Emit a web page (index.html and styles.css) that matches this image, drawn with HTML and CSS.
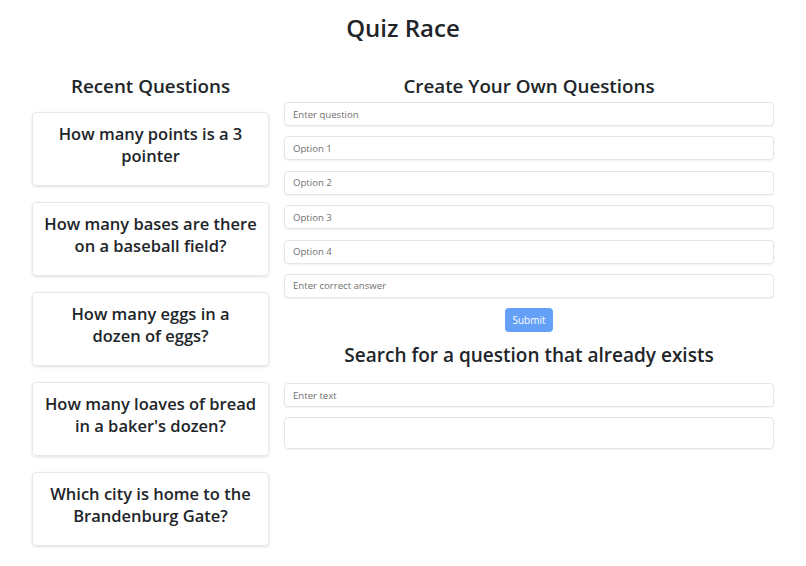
FILE: index.html
```html
<!DOCTYPE html>
<html>
<head>
<meta charset="utf-8">
<link rel="stylesheet" href="styles.css">
</head>
<body>
<h1 class="title">Quiz Race</h1>
<div class="layout">
  <section class="recent">
    <h2 class="heading">Recent Questions</h2>
    <div class="card"><h3 class="card-text">How many points is a 3 pointer</h3></div>
    <div class="card"><h3 class="card-text">How many bases are there on a baseball field?</h3></div>
    <div class="card"><h3 class="card-text">How many eggs in a<br>dozen of eggs?</h3></div>
    <div class="card"><h3 class="card-text">How many loaves of bread in a baker's dozen?</h3></div>
    <div class="card"><h3 class="card-text">Which city is home to the Brandenburg Gate?</h3></div>
  </section>
  <section class="create">
    <h2 class="heading">Create Your Own Questions</h2>
    <form class="form">
      <input class="field" type="text" placeholder="Enter question">
      <input class="field" type="text" placeholder="Option 1">
      <input class="field" type="text" placeholder="Option 2">
      <input class="field" type="text" placeholder="Option 3">
      <input class="field" type="text" placeholder="Option 4">
      <input class="field" type="text" placeholder="Enter correct answer">
      <button class="submit" type="button">Submit</button>
    </form>
    <h2 class="heading search-heading">Search for a question that already exists</h2>
    <input class="field search-field" type="text" placeholder="Enter text">
    <div class="results"></div>
  </section>
</div>
</body>
</html>
```
FILE: styles.css
```css
* { box-sizing: border-box; }
body {
  margin: 0;
  font-family: "Open Sans", "Noto Sans", sans-serif;
  color: #212529;
  background: #fff;
}
.title {
  margin: 0;
  padding-top: 12px;
  height: 73px;
  text-align: center;
  font-size: 24px;
  font-weight: 600;
  line-height: 32px;
}
.layout {
  display: grid;
  grid-template-columns: 237px 490px;
  column-gap: 15px;
  margin-left: 32px;
}
.heading {
  margin: 0;
  text-align: center;
  font-size: 18.8px;
  font-weight: 600;
  line-height: 26px;
}
.recent .heading {
  margin-bottom: 13px;
}
.create .heading {
  margin-bottom: 3px;
}
.card {
  height: 74px;
  margin-bottom: 16px;
  border: 1px solid #e6e8ea;
  border-radius: 4px;
  box-shadow: 0 1px 3px rgba(0,0,0,0.12);
  display: flex;
  justify-content: center;
  padding: 10px 10px 0;
}
.card-text {
  margin: 0;
  font-size: 16.5px;
  font-weight: 600;
  line-height: 22px;
  text-align: center;
}
.form {
  display: flex;
  flex-direction: column;
  align-items: center;
  gap: 10.4px;
  margin: 0;
}
.field {
  display: block;
  width: 100%;
  height: 24px;
  border: 1px solid #e3e6e9;
  border-radius: 4px;
  box-shadow: 0 1px 2px rgba(0,0,0,0.06);
  padding: 0 8px;
  font-family: inherit;
  font-size: 9.6px;
  color: #212529;
}
.field::placeholder { color: #707070; }
.submit {
  width: 48px;
  height: 24px;
  border: none;
  border-radius: 4px;
  background: #64a0f8;
  color: #fff;
  font-family: inherit;
  font-size: 10px;
  padding: 0;
}
.search-heading {
  font-size: 19px;
  margin-top: 10px;
  margin-bottom: 15px !important;
}
.search-field {
  margin-bottom: 10px;
}
.results {
  height: 32px;
  border: 1px solid #e3e6e9;
  border-radius: 4px;
  box-shadow: 0 1px 2px rgba(0,0,0,0.06);
}
```
